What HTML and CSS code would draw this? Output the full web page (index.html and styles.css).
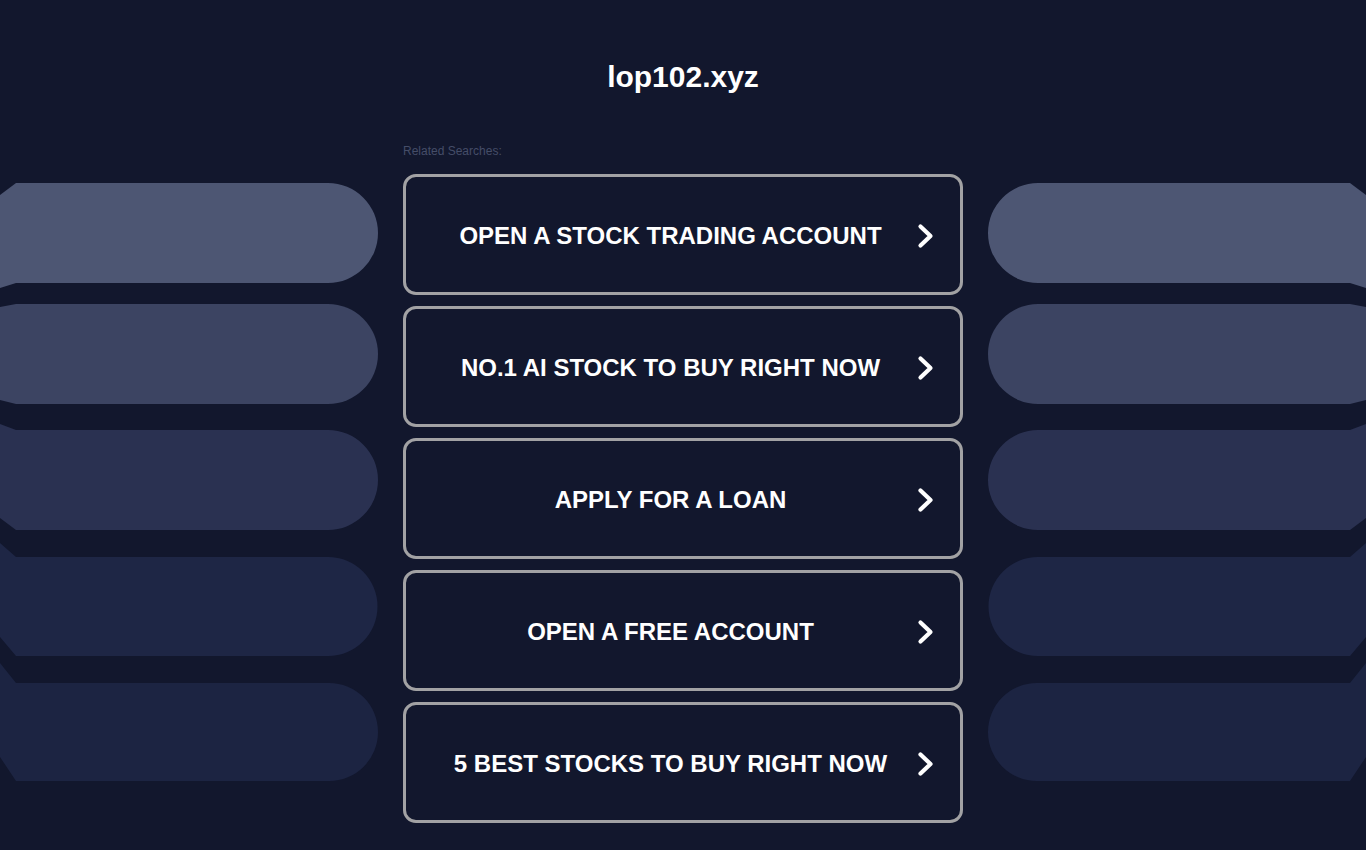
FILE: index.html
```html
<!DOCTYPE html>
<html lang="en">
<head>
<meta charset="utf-8">
<title>lop102.xyz</title>
<link rel="stylesheet" href="styles.css">
</head>
<body>
<header class="header">
  <h1 class="title">lop102.xyz</h1>
</header>
<main class="layout">
  <aside class="side side-left">
    <svg class="deco" width="378" height="600" viewBox="0 0 378 600" aria-hidden="true">
      <path fill="#4d5673" d="M0 12 L16 0 L328 0 A50 50 0 0 1 328 100 L16 100 L0 105 Z"/>
      <path fill="#3c4462" d="M0 124 L16 121 L328 121 A50 50 0 0 1 328 221 L16 221 L0 217 Z"/>
      <path fill="#2a3151" d="M0 241 L16 247 L328 247 A50 50 0 0 1 328 347 L16 347 L0 335 Z"/>
      <path fill="#1e2645" d="M0 360 L16 374 L328 374 A49.5 49.5 0 0 1 328 473 L16 473 L0 454 Z"/>
      <path fill="#1c2442" d="M0 480 L16 500 L329 500 A49 49 0 0 1 329 598 L16 598 L0 574 Z"/>
    </svg>
  </aside>
  <section class="center">
    <p class="related">Related Searches:</p>
    <nav class="links">
      <a class="link" href="#"><span class="label">OPEN A STOCK TRADING ACCOUNT</span><svg class="chev" width="17" height="26" viewBox="0 0 17 26"><path d="M3.5 3.5 L13.5 13 L3.5 22.5"/></svg></a>
      <a class="link" href="#"><span class="label">NO.1 AI STOCK TO BUY RIGHT NOW</span><svg class="chev" width="17" height="26" viewBox="0 0 17 26"><path d="M3.5 3.5 L13.5 13 L3.5 22.5"/></svg></a>
      <a class="link" href="#"><span class="label">APPLY FOR A LOAN</span><svg class="chev" width="17" height="26" viewBox="0 0 17 26"><path d="M3.5 3.5 L13.5 13 L3.5 22.5"/></svg></a>
      <a class="link" href="#"><span class="label">OPEN A FREE ACCOUNT</span><svg class="chev" width="17" height="26" viewBox="0 0 17 26"><path d="M3.5 3.5 L13.5 13 L3.5 22.5"/></svg></a>
      <a class="link" href="#"><span class="label">5 BEST STOCKS TO BUY RIGHT NOW</span><svg class="chev" width="17" height="26" viewBox="0 0 17 26"><path d="M3.5 3.5 L13.5 13 L3.5 22.5"/></svg></a>
    </nav>
  </section>
  <aside class="side side-right">
    <svg class="deco mirror" width="378" height="600" viewBox="0 0 378 600" aria-hidden="true">
      <path fill="#4d5673" d="M0 12 L16 0 L328 0 A50 50 0 0 1 328 100 L16 100 L0 105 Z"/>
      <path fill="#3c4462" d="M0 124 L16 121 L328 121 A50 50 0 0 1 328 221 L16 221 L0 217 Z"/>
      <path fill="#2a3151" d="M0 241 L16 247 L328 247 A50 50 0 0 1 328 347 L16 347 L0 335 Z"/>
      <path fill="#1e2645" d="M0 360 L16 374 L328 374 A49.5 49.5 0 0 1 328 473 L16 473 L0 454 Z"/>
      <path fill="#1c2442" d="M0 480 L16 500 L329 500 A49 49 0 0 1 329 598 L16 598 L0 574 Z"/>
    </svg>
  </aside>
</main>
</body>
</html>
```

FILE: styles.css
```css
html {
  background: #12172d;
}

body {
  margin: 0;
  min-height: 850px;
  background: #12172d;
  font-family: "Liberation Sans", Arial, sans-serif;
  color: #ffffff;
  overflow: hidden;
}

.header {
  padding-top: 59px;
  text-align: center;
}

.title {
  margin: 0;
  font-size: 30px;
  line-height: 36px;
  font-weight: 700;
  color: #ffffff;
}

.layout {
  display: grid;
  grid-template-columns: 378px 560px 378px;
  column-gap: 25px;
}

.side {
  padding-top: 88px;
}

.deco {
  display: block;
}

.mirror {
  transform: scaleX(-1);
}

.center {
  padding-top: 49px;
}

.related {
  margin: 0 0 16px;
  font-size: 12px;
  line-height: 14px;
  color: #454d68;
}

.links {
  display: flex;
  flex-direction: column;
  gap: 11px;
}

.link {
  display: flex;
  align-items: center;
  box-sizing: border-box;
  height: 121px;
  padding: 3px 26px 0 0;
  border: 3px solid #a2a2a4;
  border-radius: 13px;
  background: #12172d;
  color: #ffffff;
  text-decoration: none;
}

.label {
  flex: 1;
  text-align: center;
  font-size: 24px;
  font-weight: 700;
  line-height: 28px;
  margin-right: -18px;
}

.chev {
  display: block;
  flex: none;
}

.chev path {
  fill: none;
  stroke: #ffffff;
  stroke-width: 4.2;
  stroke-linecap: round;
  stroke-linejoin: round;
}
```
